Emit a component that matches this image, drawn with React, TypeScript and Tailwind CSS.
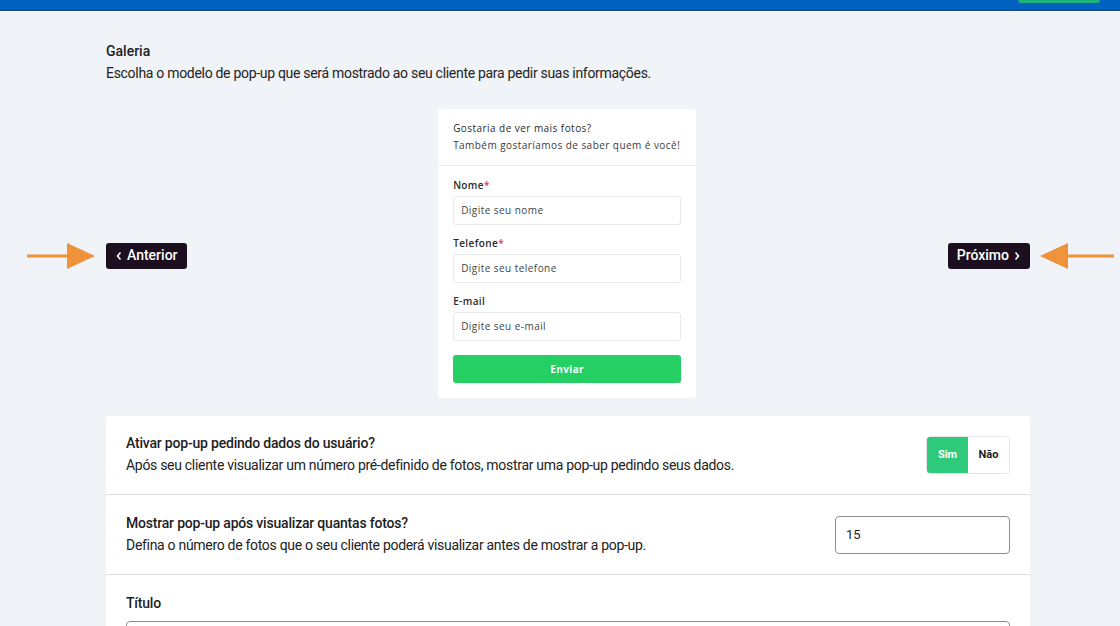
import React from 'react';

const ArrowRight = () => (
  <svg width="68" height="28" viewBox="0 0 68 28" className="shrink-0">
    <rect x="0" y="12.5" width="44" height="3" fill="#ef923a" />
    <polygon points="40,1 68,14 40,27" fill="#ef923a" />
  </svg>
);

const ArrowLeft = () => (
  <svg width="74" height="28" viewBox="0 0 74 28" className="shrink-0">
    <rect x="24" y="12.5" width="50" height="3" fill="#ef923a" />
    <polygon points="28,1 0,14 28,27" fill="#ef923a" />
  </svg>
);

const PreviewField = ({ label, placeholder, required }: { label: string; placeholder: string; required?: boolean }) => (
  <div>
    <div className="text-[10px] font-semibold text-[#2a2a2a] leading-[12px] tracking-[0.4px]">
      {label}
      {required && <span className="text-[#d6336c]">*</span>}
    </div>
    <div className="mt-[5px] h-[29px] rounded-[3px] border border-[#e6e8ec] px-[7px] flex items-center text-[10px] tracking-[0.45px] text-[#444]">
      {placeholder}
    </div>
  </div>
);

export default function App() {
  return (
    <div className="min-h-[626px] bg-[#f0f3f8] font-['Roboto',sans-serif] text-[#1d1d1f] overflow-hidden">
      <div className="h-[11px] bg-[#0262c2] border-b-[2px] border-[#1a4f86] relative">
        <div className="absolute right-[20px] top-0 h-[3px] w-[82px] rounded-b-[3px] bg-[#1fb37c]" />
      </div>

      <div className="w-[924px] ml-[106px] pt-[30px]">
        <h2 className="text-[14px] font-medium leading-[20px] tracking-[0px]">Galeria</h2>
        <p className="mt-[3px] text-[14px] leading-[18px] tracking-[-0.3px] text-[#222]">
          Escolha o modelo de pop-up que será mostrado ao seu cliente para pedir suas informações.
        </p>
      </div>

      <div className="flex items-center mt-[27px]">
        <div className="w-[106px] flex justify-end pr-[11px] pt-[4px]">
          <ArrowRight />
        </div>
        <div className="w-[924px] flex items-center justify-between">
          <button className="h-[26px] px-[9px] rounded-[3px] bg-[#1c0f1f] text-white text-[14px] font-medium flex items-center gap-[4px] mt-[4px]">
            <svg width="8" height="10" viewBox="0 0 8 10"><path d="M5.5 1.5L2.5 5l3 3.5" stroke="white" strokeWidth="1.6" fill="none" /></svg>
            Anterior
          </button>

          <div className="w-[258px] bg-white rounded-[3px] font-['Open_Sans',sans-serif]">
            <div className="px-[15px] pt-[11px] pb-[11px] border-b border-[#e7e9ec]">
              <div className="text-[10px] font-medium leading-[17px] tracking-[0.45px] text-[#2a2a2a]">Gostaria de ver mais fotos?</div>
              <div className="text-[10px] leading-[17px] tracking-[0.45px] text-[#3a3a3a]">Também gostaríamos de saber quem é você!</div>
            </div>
            <div className="px-[15px] pt-[13px] pb-[15px] flex flex-col gap-[12px]">
              <PreviewField label="Nome" placeholder="Digite seu nome" required />
              <PreviewField label="Telefone" placeholder="Digite seu telefone" required />
              <PreviewField label="E-mail" placeholder="Digite seu e-mail" />
              <button className="h-[28px] mt-[2px] rounded-[3px] bg-[#25cf63] text-white text-[10px] font-bold tracking-[0.4px]">Enviar</button>
            </div>
          </div>

          <button className="h-[26px] px-[9px] rounded-[3px] bg-[#1c0f1f] text-white text-[14px] font-medium flex items-center gap-[4px] mt-[4px]">
            Próximo
            <svg width="8" height="10" viewBox="0 0 8 10"><path d="M2.5 1.5L5.5 5l-3 3.5" stroke="white" strokeWidth="1.6" fill="none" /></svg>
          </button>
        </div>
        <div className="pl-[10px] pt-[4px]">
          <ArrowLeft />
        </div>
      </div>

      <div className="w-[924px] ml-[106px] mt-[18px] bg-white rounded-t-[3px]">
        <div className="flex items-center justify-between px-[20px] h-[79px] border-b border-[#dcdfe3]">
          <div className="-mt-[3px]">
            <div className="text-[14px] font-medium leading-[20px] tracking-[-0.2px]">Ativar pop-up pedindo dados do usuário?</div>
            <div className="mt-[3px] text-[14px] leading-[18px] tracking-[-0.3px] text-[#222]">
              Após seu cliente visualizar um número pré-definido de fotos, mostrar uma pop-up pedindo seus dados.
            </div>
          </div>
          <div className="flex h-[38px] rounded-[4px] border border-[#e3e5e8] overflow-hidden">
            <div className="w-[41px] bg-[#2ec97a] text-white text-[11px] font-bold flex items-center justify-center">Sim</div>
            <div className="w-[41px] bg-white text-[#1d1d1f] text-[11px] font-bold flex items-center justify-center">Não</div>
          </div>
        </div>

        <div className="flex items-center justify-between px-[20px] h-[80px] border-b border-[#dcdfe3]">
          <div className="-mt-[3px]">
            <div className="text-[14px] font-medium leading-[20px] tracking-[-0.2px]">Mostrar pop-up após visualizar quantas fotos?</div>
            <div className="mt-[3px] text-[14px] leading-[18px] tracking-[-0.3px] text-[#222]">
              Defina o número de fotos que o seu cliente poderá visualizar antes de mostrar a pop-up.
            </div>
          </div>
          <div className="w-[175px] h-[38px] rounded-[4px] border border-[#8a8d91] px-[10px] flex items-center text-[13px]">15</div>
        </div>

        <div className="px-[20px] pt-[18px] pb-[20px]">
          <div className="text-[14px] font-medium leading-[20px] tracking-[-0.2px]">Título</div>
          <div className="mt-[8px] h-[38px] rounded-[4px] border border-[#8a8d91]" />
        </div>
      </div>
    </div>
  );
}
